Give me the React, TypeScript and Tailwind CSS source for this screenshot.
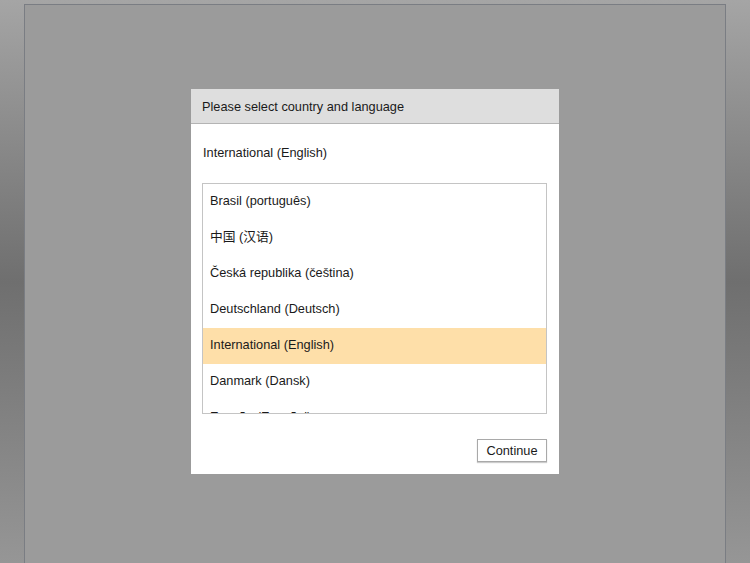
import type { ReactElement } from 'react'

const countries = [
  'Brasil (português)',
  '中国 (汉语)',
  'Česká republika (čeština)',
  'Deutschland (Deutsch)',
  'International (English)',
  'Danmark (Dansk)',
  'España (Español)',
  'France (Français)',
]

const selected = 'International (English)'

export default function App(): ReactElement {
  return (
    <div
      className="flex h-[563px] w-[750px] overflow-hidden bg-gradient-to-b from-[#a5a5a5] via-[#6f6f6f] to-[#969696] px-[24px] pt-[4px] text-[#1a1a1a]"
      style={{ fontFamily: '"Liberation Sans", Arial, "Noto Sans CJK SC", sans-serif' }}
    >
      <div className="flex flex-1 justify-center border-x border-t border-[#7a7d83] bg-[#9b9b9b] pt-[84px]">
        <div className="flex h-[385px] w-[368px] flex-col bg-white">
          <div className="flex h-[35px] items-center border-b border-[#b4b4b4] bg-[#dedede] pl-[11px] pt-[1px] text-[12.75px]">
            Please select country and language
          </div>
          <div className="px-[11px] pt-[21px] text-[12.75px] leading-[16px]">
            <div className="pl-[1px]">{selected}</div>
          </div>
          <div className="mx-[11px] mt-[22px] h-[231px] w-[345px] overflow-hidden border border-[#c4c4c4]">
            {countries.map((name) => (
              <div
                key={name}
                className={
                  name === selected
                    ? 'flex h-[36px] items-center bg-[#fedfa9] pb-[3px] pl-[7px] text-[12.75px]'
                    : 'flex h-[36px] items-center pb-[3px] pl-[7px] text-[12.75px]'
                }
              >
                {name}
              </div>
            ))}
          </div>
          <div className="mt-[25px] flex justify-end pr-[12px]">
            <button className="h-[23px] w-[70px] border border-[#a9a9a9] bg-white text-[12.75px] shadow-[0_1px_1px_rgba(0,0,0,0.2)]">
              Continue
            </button>
          </div>
        </div>
      </div>
    </div>
  )
}
